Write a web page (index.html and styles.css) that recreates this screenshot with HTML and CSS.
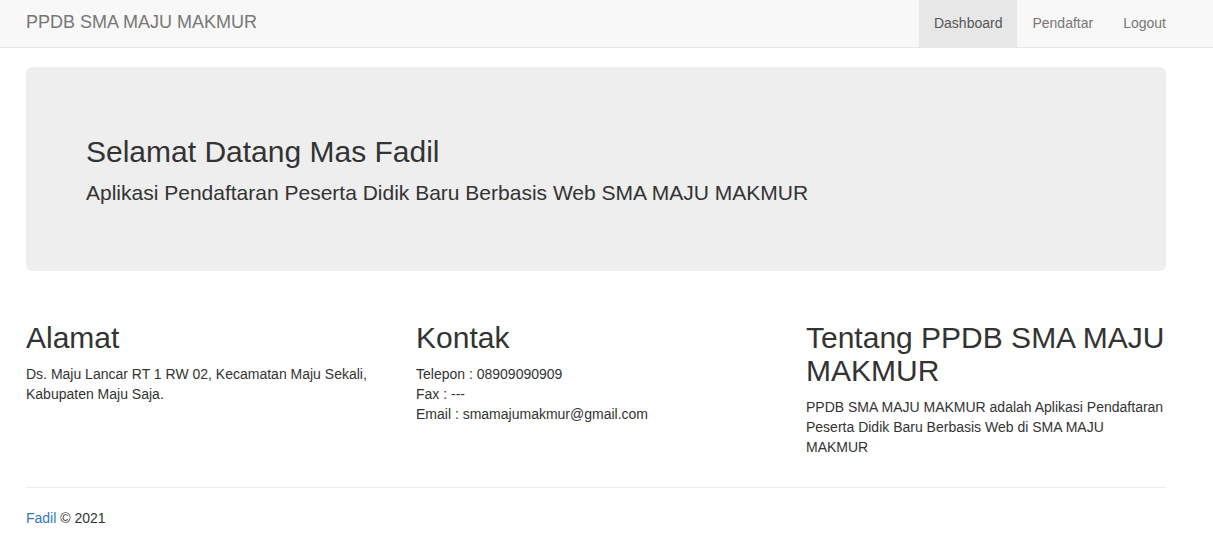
FILE: index.html
```html
<!DOCTYPE html>
<html lang="id">
<head>
<meta charset="utf-8">
<title>PPDB SMA MAJU MAKMUR</title>
<link rel="stylesheet" href="styles.css">
</head>
<body>
<nav class="navbar">
  <div class="container navbar-inner">
    <a class="brand" href="#">PPDB SMA MAJU MAKMUR</a>
    <ul class="nav">
      <li class="active"><a href="#">Dashboard</a></li>
      <li><a href="#">Pendaftar</a></li>
      <li><a href="#">Logout</a></li>
    </ul>
  </div>
</nav>
<main class="container">
  <section class="jumbotron">
    <h1>Selamat Datang Mas Fadil</h1>
    <p>Aplikasi Pendaftaran Peserta Didik Baru Berbasis Web SMA MAJU MAKMUR</p>
  </section>
  <div class="row">
    <div class="col">
      <h2>Alamat</h2>
      <p>Ds. Maju Lancar RT 1 RW 02, Kecamatan Maju Sekali, Kabupaten Maju Saja.</p>
    </div>
    <div class="col">
      <h2>Kontak</h2>
      <p>Telepon : 08909090909<br>Fax : ---<br>Email : smamajumakmur@gmail.com</p>
    </div>
    <div class="col">
      <h2>Tentang PPDB SMA MAJU MAKMUR</h2>
      <p>PPDB SMA MAJU MAKMUR adalah Aplikasi Pendaftaran Peserta Didik Baru Berbasis Web di SMA MAJU MAKMUR</p>
    </div>
  </div>
  <hr class="divider">
  <footer class="footer">
    <p><a href="#">Fadil</a> &copy; 2021</p>
  </footer>
</main>
</body>
</html>
```
FILE: styles.css
```css
* { box-sizing: border-box; }
html, body { margin: 0; padding: 0; }
body {
  font-family: "Liberation Sans", Arial, sans-serif;
  font-size: 14px;
  line-height: 20px;
  color: #333;
  background: #fff;
}
a { color: #337ab7; text-decoration: none; }

.container {
  width: 1170px;
  padding: 0 15px;
  margin-left: 11px;
}

.navbar {
  background: #f8f8f8;
  border-bottom: 1px solid #e7e7e7;
  margin-bottom: 19px;
}
.navbar-inner {
  display: flex;
  justify-content: space-between;
  align-items: stretch;
  height: 47px;
}
.brand {
  font-size: 18px;
  line-height: 20px;
  padding: 12px 0 15px;
  color: #777;
}
.nav {
  display: flex;
  list-style: none;
  margin: 0 -15px 0 0;
  padding: 0;
}
.nav a {
  display: block;
  padding: 13px 15px 14px;
  line-height: 20px;
  color: #777;
}
.nav .active a {
  background: #e7e7e7;
  color: #555;
}

.jumbotron {
  background: #eee;
  border-radius: 6px;
  padding: 48px 60px;
  margin-bottom: 30px;
}
.jumbotron h1 {
  font-size: 30px;
  line-height: 33px;
  font-weight: 500;
  margin: 20px 0 10px;
}
.jumbotron p {
  font-size: 21px;
  line-height: 30px;
  margin: 0 0 15px;
}

.row {
  display: grid;
  grid-template-columns: repeat(3, 1fr);
  margin: 0 -15px;
}
.col { padding: 0 15px; }
.col h2 {
  font-size: 30px;
  line-height: 33px;
  font-weight: 500;
  margin: 20px 0 10px;
}
.col p { margin: 0 0 10px; }

.divider {
  border: 0;
  border-top: 1px solid #eee;
  margin: 20px 0;
  height: 0;
}
.footer p { margin: 0 0 10px; }
```
